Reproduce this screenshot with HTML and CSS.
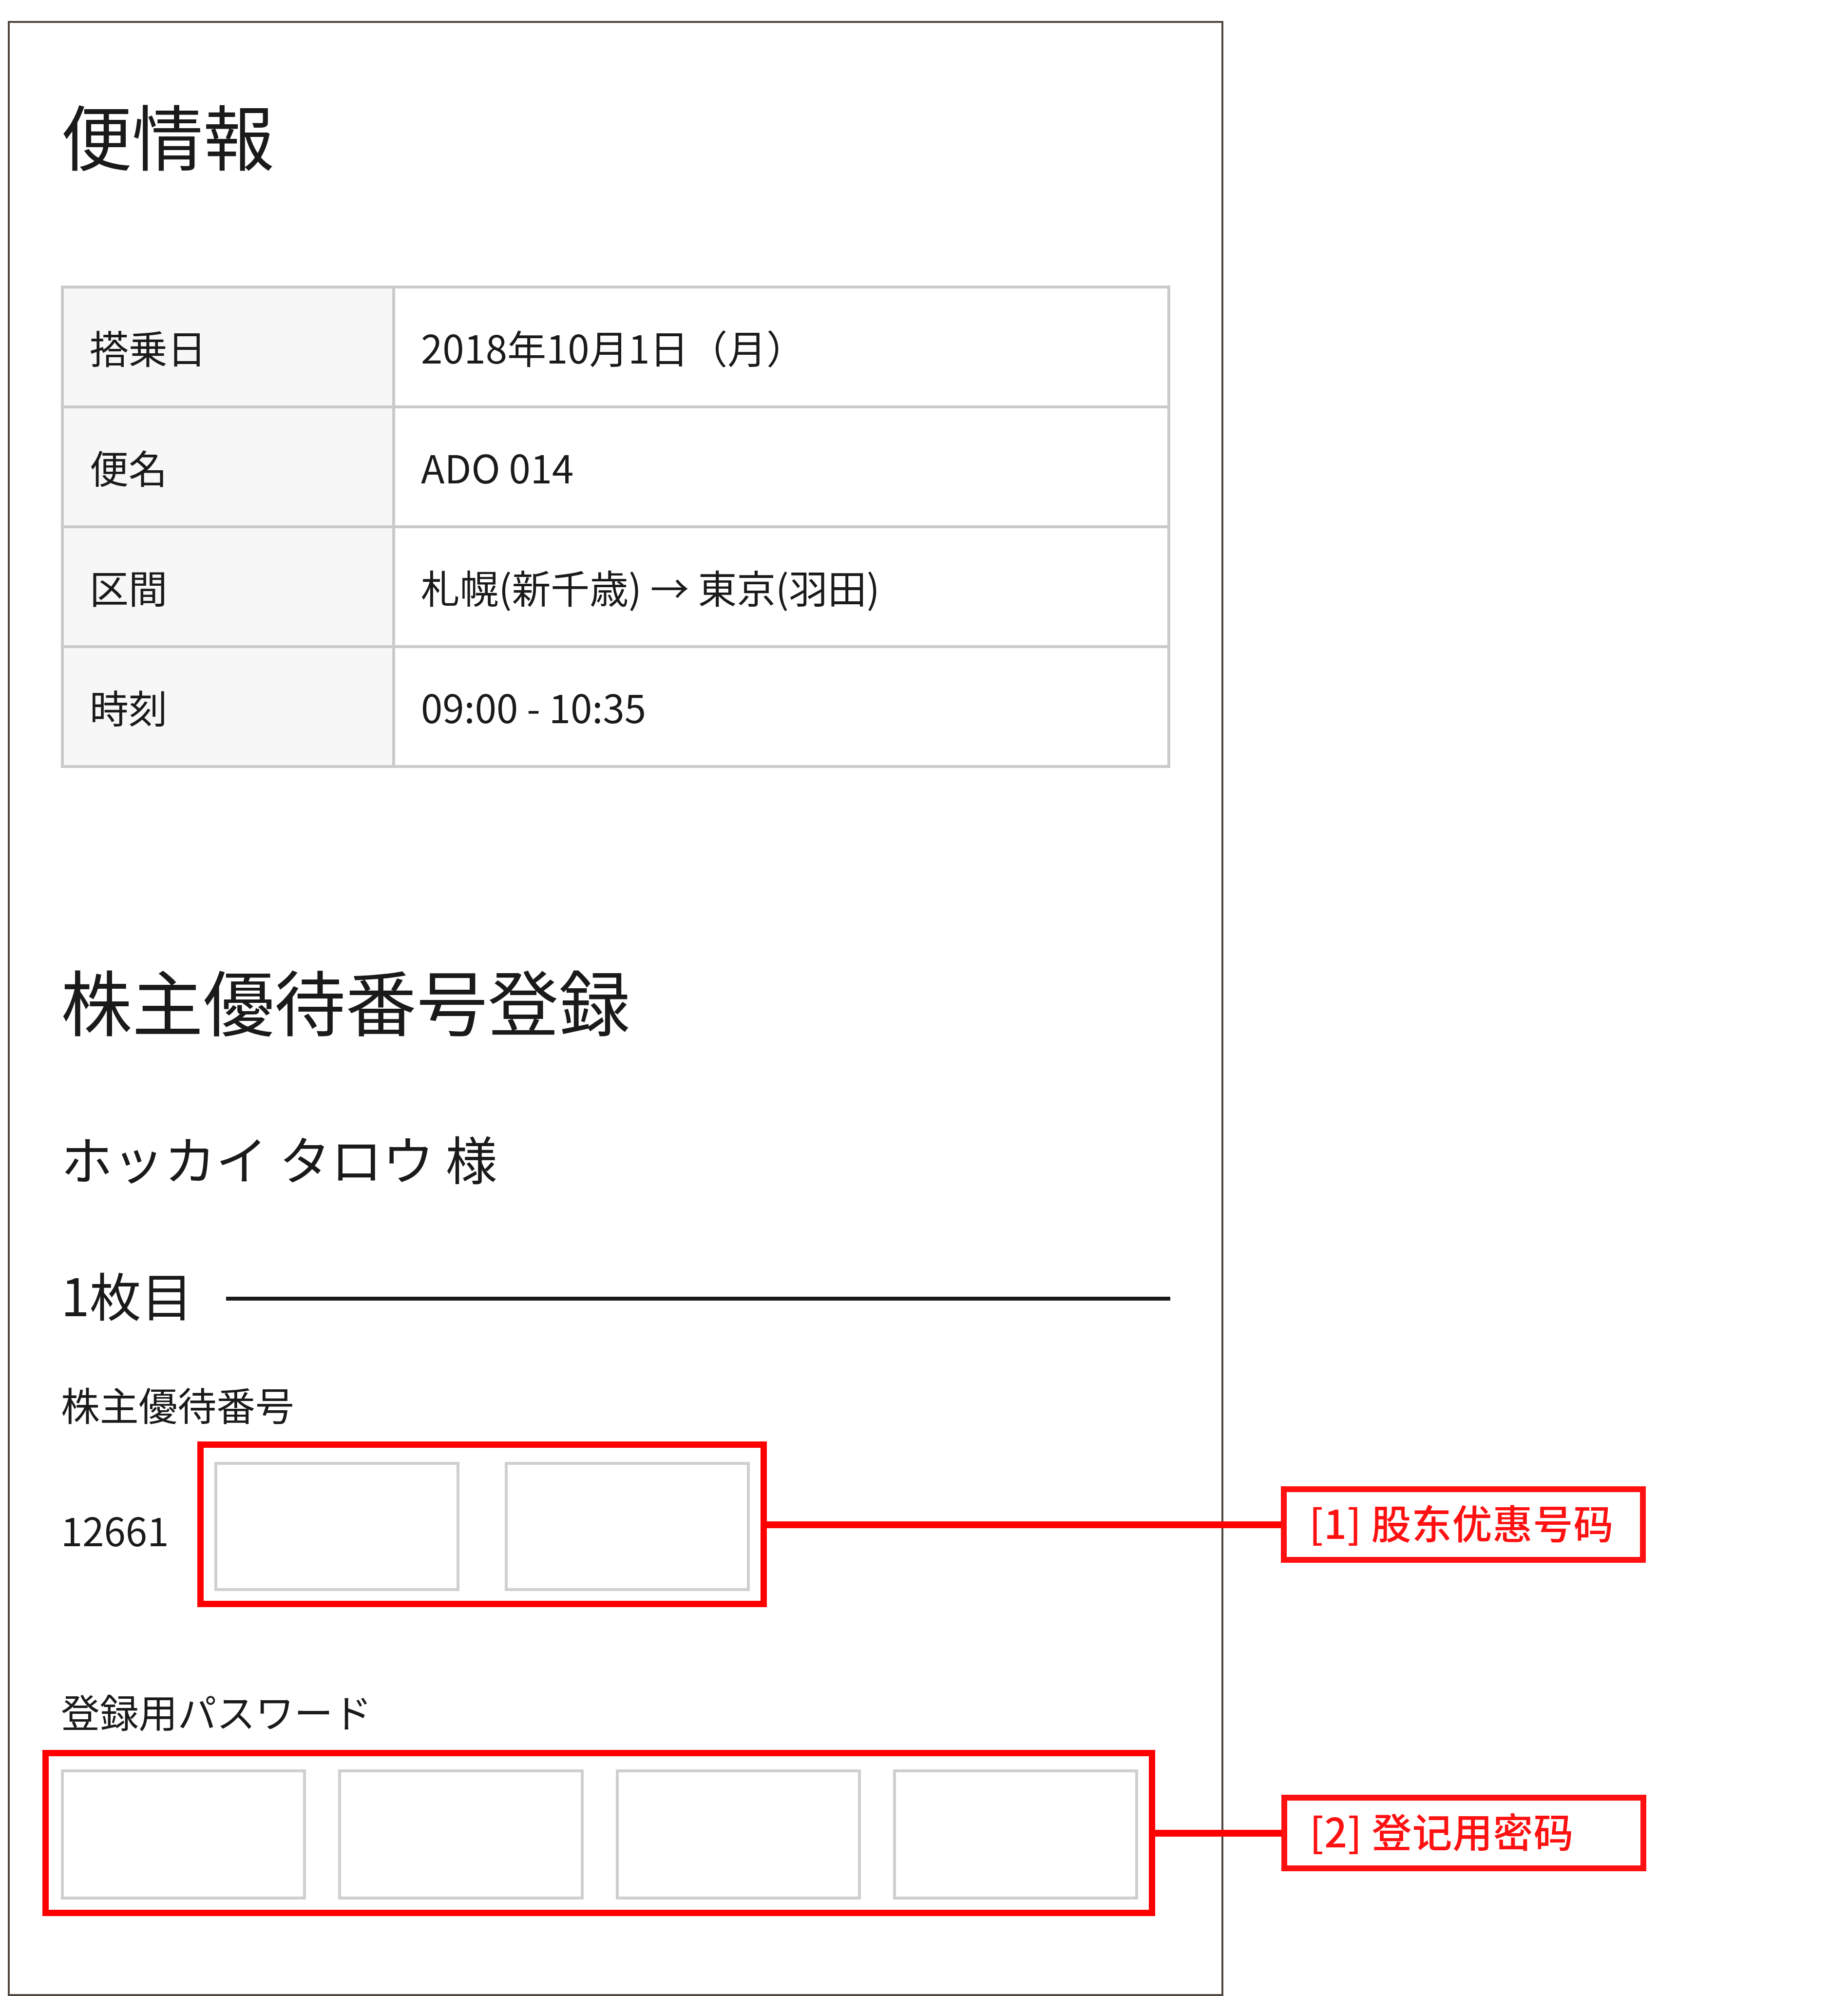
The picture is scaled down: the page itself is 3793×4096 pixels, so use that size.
FILE: index.html
```html
<!DOCTYPE html>
<html lang="ja">
<head>
    <meta charset="UTF-8">
    <meta name="viewport" content="width=device-width, initial-scale=1.0">
    <title>株主優待番号登録</title>
    <link rel="stylesheet" href="styles.css">
</head>
<body>
    <div class="screen">
        <h2 class="title">便情報</h2>

        <table class="flight">
            <tr>
                <th>搭乗日</th>
                <td>2018年10月1日（月）</td>
            </tr>
            <tr>
                <th>便名</th>
                <td>ADO 014</td>
            </tr>
            <tr>
                <th>区間</th>
                <td>札幌(新千歳) → 東京(羽田)</td>
            </tr>
            <tr>
                <th>時刻</th>
                <td>09:00 - 10:35</td>
            </tr>
        </table>

        <h2 class="title">株主優待番号登録</h2>
        <p class="passenger">ホッカイ タロウ 様</p>

        <h3 class="sheet">1枚目</h3>

        <!-- 株主優待番号 -->
        <p class="label">株主優待番号</p>
        <div class="number-row">
            <span class="prefix">12661</span>
            <div class="mark mark-number">
                <input type="text" class="box">
                <input type="text" class="box">
                <div class="callout">
                    <span class="line"></span>
                    <span class="note" lang="zh-CN">[1] 股东优惠号码</span>
                </div>
            </div>
        </div>

        <!-- 登録用パスワード -->
        <p class="label">登録用パスワード</p>
        <div class="mark mark-password">
            <input type="text" class="box">
            <input type="text" class="box">
            <input type="text" class="box">
            <input type="text" class="box">
            <div class="callout">
                <span class="line"></span>
                <span class="note" lang="zh-CN">[2] 登记用密码</span>
            </div>
        </div>
    </div>
</body>
</html>
```
FILE: styles.css
```css
* {
    box-sizing: border-box;
}

body {
    margin: 0;
    height: 4096px;
    padding: 43px 0 0 16px;
    background-color: #fff;
    color: #1a1a1a;
    font-family: "Noto Sans CJK JP", sans-serif;
    font-size: 79.8px;
    line-height: 80px;
    overflow: hidden;
}

.screen {
    width: 2495px;
    height: 4053px;
    padding: 155px 105px 0;
    border: 4px solid #50463f;
}

.title {
    margin: 0;
    font-size: 146px;
    font-weight: 400;
    line-height: 146px;
}

/* 便情報の表 */
.flight {
    width: 2277px;
    margin: 238px 0 402px;
    border-collapse: collapse;
    table-layout: fixed;
}

.flight th,
.flight td {
    height: 246px;
    padding: 0 53px 2px;
    border: 6px solid #cacaca;
    font-weight: 400;
    text-align: left;
    vertical-align: middle;
}

.flight th {
    width: 680px;
    background-color: #f7f7f7;
}

.passenger {
    margin: 198px 0 174px;
    font-size: 106px;
    line-height: 106px;
}

.sheet {
    display: flex;
    align-items: center;
    gap: 68px;
    margin: 0 0 132px;
    font-size: 106px;
    font-weight: 400;
    line-height: 106px;
}

.sheet::after {
    content: "";
    flex: 1;
    height: 8px;
    margin-top: 19px;
    background-color: #1a1a1a;
}

.label {
    margin: 0 0 38px;
}

.number-row {
    display: flex;
    align-items: center;
    margin-bottom: 172px;
}

.prefix {
    width: 280px;
    padding-top: 19px;
}

/* 赤枠 */
.mark {
    position: relative;
    display: flex;
    border: 13px solid #f00;
}

.mark-number {
    width: 1169px;
    height: 340px;
    padding: 29px 22px 20px;
    gap: 93px;
}

.mark-password {
    width: 2284px;
    height: 341px;
    margin: 41px 0 0 -38px;
    padding: 27px 22px 21px 25px;
    gap: 66px;
}

.box {
    flex: 1;
    min-width: 0;
    margin: 0;
    padding: 0 20px;
    border: 6px solid #cfcfcf;
    border-radius: 0;
    background-color: #fff;
    font: inherit;
}

/* 枠の右に出る説明 */
.callout {
    position: absolute;
    top: 79px;
    right: -1817px;
    display: flex;
    align-items: center;
    width: 1804px;
    height: 157px;
}

.mark-password .callout {
    right: -1021px;
    width: 1008px;
}

.line {
    flex: 1;
    height: 14px;
    background-color: #f00;
}

.note {
    width: 749px;
    height: 157px;
    padding: 20px 0 0 46px;
    border: 12px solid #f11;
    color: #f11;
    font-family: "Noto Sans CJK SC", sans-serif;
    font-size: 82px;
    font-weight: 500;
    line-height: 82px;
    letter-spacing: 1px;
    white-space: nowrap;
}
```
